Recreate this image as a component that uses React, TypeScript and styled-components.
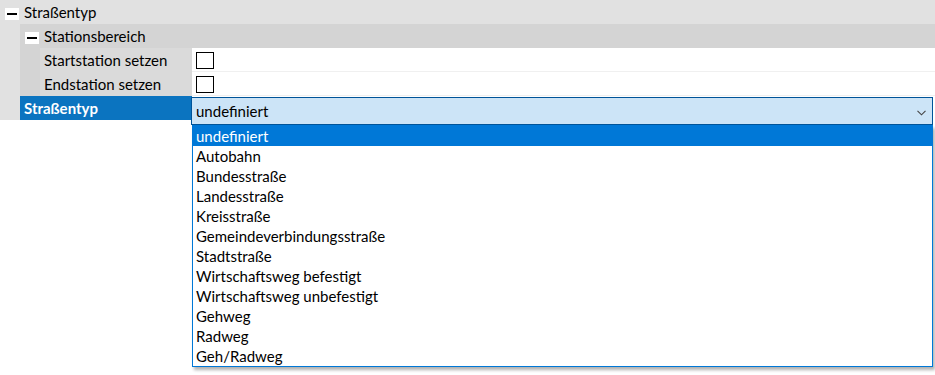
import React from "react";
import styled, { createGlobalStyle } from "styled-components";

const Global = createGlobalStyle`
  html, body { margin: 0; padding: 0; background: #ffffff; }
  body { font-family: Lato, "Noto Sans", sans-serif; font-size: 15px; color: #000; }
  * { box-sizing: border-box; }
`;

const Grid = styled.div`
  position: relative;
  width: 935px;
  height: 375px;
  display: flex;
  flex-direction: column;
`;

const CategoryRow = styled.div`
  height: 24px;
  display: flex;
  align-items: stretch;
  background: #e1e1e1;
`;

const Indent = styled.div<{ $w: number; $bg: string }>`
  width: ${(p) => p.$w}px;
  flex: none;
  background: ${(p) => p.$bg};
`;

const CategoryBody = styled.div<{ $bg: string }>`
  flex: 1;
  display: flex;
  align-items: center;
  background: ${(p) => p.$bg};
  padding-left: 5px;
  gap: 5px;
`;

const Expander = styled.span`
  width: 14px;
  height: 12px;
  margin-top: 3px;
  background: #ffffff;
  display: flex;
  align-items: center;
  justify-content: center;
  flex: none;
  &::after {
    content: "";
    width: 10px;
    height: 2px;
    background: #000;
  }
`;

const CatLabel = styled.span`
  line-height: 24px;
  color: #000;
`;

const PropRow = styled.div`
  height: 24px;
  display: flex;
  align-items: stretch;
`;

const LabelCell = styled.div<{ $selected?: boolean }>`
  width: ${(p) => (p.$selected ? 172 : 152)}px;
  flex: none;
  display: flex;
  align-items: center;
  padding-left: 4px;
  background: ${(p) => (p.$selected ? "#0b74c0" : "#dadada")};
  color: ${(p) => (p.$selected ? "#ffffff" : "#000")};
  font-weight: ${(p) => (p.$selected ? 700 : 400)};
  white-space: nowrap;
`;

const ValueCell = styled.div`
  flex: 1;
  display: flex;
  align-items: center;
  padding-left: 4px;
  background: #ffffff;
  border-bottom: 1px solid #f0f0f0;
`;

const CheckBox = styled.span`
  width: 18px;
  height: 17px;
  border: 1px solid #000;
  background: #fff;
  margin-top: 2px;
`;

const Combo = styled.div`
  flex: 1;
  align-self: flex-start;
  height: 28px;
  margin-top: 1px;
  margin-left: -1px;
  margin-right: 2px;
  background: #cce4f7;
  border: 1px solid #005499;
  display: flex;
  align-items: center;
  justify-content: space-between;
  padding: 0 6px 0 4px;
  position: relative;
  z-index: 1;
`;

const ComboText = styled.span`
  line-height: 24px;
`;

const Chevron = styled.svg`
  width: 9px;
  height: 6px;
  margin-top: 3px;
`;

const DropList = styled.ul`
  position: absolute;
  left: 192px;
  top: 125px;
  width: 741px;
  margin: 0;
  padding: 0;
  list-style: none;
  background: #ffffff;
  border: 1px solid #0078d7;
  box-shadow: 2px 3px 3px rgba(0, 0, 0, 0.3);
  z-index: 2;
`;

const Item = styled.li<{ $active?: boolean }>`
  height: 20px;
  line-height: 20px;
  padding-left: 3px;
  background: ${(p) => (p.$active ? "#0078d7" : "transparent")};
  color: ${(p) => (p.$active ? "#ffffff" : "#000")};
  white-space: nowrap;
`;

const options = [
  "undefiniert",
  "Autobahn",
  "Bundesstraße",
  "Landesstraße",
  "Kreisstraße",
  "Gemeindeverbindungsstraße",
  "Stadtstraße",
  "Wirtschaftsweg befestigt",
  "Wirtschaftsweg unbefestigt",
  "Gehweg",
  "Radweg",
  "Geh/Radweg",
];

export default function App() {
  return (
    <>
      <Global />
      <Grid>
        <CategoryRow>
          <CategoryBody $bg="#e1e1e1">
            <Expander />
            <CatLabel>Straßentyp</CatLabel>
          </CategoryBody>
        </CategoryRow>
        <CategoryRow>
          <Indent $w={20} $bg="#e1e1e1" />
          <CategoryBody $bg="#d4d4d4">
            <Expander />
            <CatLabel>Stationsbereich</CatLabel>
          </CategoryBody>
        </CategoryRow>
        <PropRow>
          <Indent $w={20} $bg="#e1e1e1" />
          <Indent $w={20} $bg="#d4d4d4" />
          <LabelCell>Startstation setzen</LabelCell>
          <ValueCell>
            <CheckBox />
          </ValueCell>
        </PropRow>
        <PropRow>
          <Indent $w={20} $bg="#e1e1e1" />
          <Indent $w={20} $bg="#d4d4d4" />
          <LabelCell>Endstation setzen</LabelCell>
          <ValueCell>
            <CheckBox />
          </ValueCell>
        </PropRow>
        <PropRow>
          <Indent $w={20} $bg="#e1e1e1" />
          <LabelCell $selected>Straßentyp</LabelCell>
          <Combo>
            <ComboText>undefiniert</ComboText>
            <Chevron viewBox="0 0 9 6">
              <path d="M0.5 0.8 L4.5 4.8 L8.5 0.8" fill="none" stroke="#444" strokeWidth="1.1" />
            </Chevron>
          </Combo>
        </PropRow>
        <DropList>
          {options.map((o, i) => (
            <Item key={o} $active={i === 0}>
              {o}
            </Item>
          ))}
        </DropList>
      </Grid>
    </>
  );
}
